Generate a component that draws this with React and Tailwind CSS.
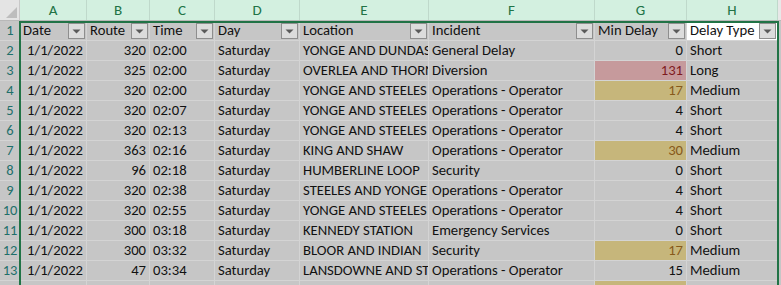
import React from "react";

const cols = [
  { l: "A", w: "w-[67px]" },
  { l: "B", w: "w-[63px]" },
  { l: "C", w: "w-[65px]" },
  { l: "D", w: "w-[85px]" },
  { l: "E", w: "w-[129px]" },
  { l: "F", w: "w-[166px]" },
  { l: "G", w: "w-[92px]" },
  { l: "H", w: "w-[91px]" },
];

const headers = ["Date", "Route", "Time", "Day", "Location", "Incident", "Min Delay", "Delay Type"];

const OPS = "Operations - Operator";
const rows = [
  ["320", "02:00", "YONGE AND DUNDAS", "General Delay", "0", "Short", ""],
  ["325", "02:00", "OVERLEA AND THORNCLIFFE", "Diversion", "131", "Long", "pink"],
  ["320", "02:00", "YONGE AND STEELES", OPS, "17", "Medium", "gold"],
  ["320", "02:07", "YONGE AND STEELES", OPS, "4", "Short", ""],
  ["320", "02:13", "YONGE AND STEELES", OPS, "4", "Short", ""],
  ["363", "02:16", "KING AND SHAW", OPS, "30", "Medium", "gold"],
  ["96", "02:18", "HUMBERLINE LOOP", "Security", "0", "Short", ""],
  ["320", "02:38", "STEELES AND YONGE", OPS, "4", "Short", ""],
  ["320", "02:55", "YONGE AND STEELES", OPS, "4", "Short", ""],
  ["300", "03:18", "KENNEDY STATION", "Emergency Services", "0", "Short", ""],
  ["300", "03:32", "BLOOR AND INDIAN", "Security", "17", "Medium", "gold"],
  ["47", "03:34", "LANSDOWNE AND ST. CLAIR", OPS, "15", "Medium", ""],
];

const cell = "h-[20px] border-r border-b border-[#d4d4d4] overflow-hidden whitespace-nowrap leading-[19px] text-[14.67px] text-[#111]";

function FilterBtn() {
  return (
    <div className="absolute right-[1px] top-[2px] w-[17px] h-[16px] border border-[#8e8e8e] bg-[#dcdcdc] flex items-center justify-center">
      <svg width="9" height="5" viewBox="0 0 9 5">
        <polygon points="0.5,0.5 8.5,0.5 4.5,4.5" fill="#5a5a5a" />
      </svg>
    </div>
  );
}

export default function App() {
  return (
    <div className="w-[781px] h-[285px] overflow-hidden bg-[#c6c6c6]" style={{ fontFamily: "Carlito, Calibri, Lato, sans-serif" }}>
      <div className="flex h-[21px] border-b border-[#b8b8b8] bg-[#d3f0e0]">
        <div className="w-[20px] h-full bg-[#e4e4e4] relative border-r border-[#c8c8c8]">
          <svg className="absolute right-[2px] bottom-[2px]" width="11" height="11" viewBox="0 0 11 11">
            <polygon points="11,0 11,11 0,11" fill="#bdbdbd" />
          </svg>
        </div>
        {cols.map((c) => (
          <div key={c.l} className={`${c.w} h-full border-r border-[#bfd9cb] flex items-center justify-center text-[15px] text-[#217346]`}>
            {c.l}
          </div>
        ))}
        <div className="flex-1 bg-[#e8e8e8]" />
      </div>

      <div className="relative flex">
        <div className="w-[20px] flex flex-col">
          {Array.from({ length: 14 }).map((_, i) => (
            <div key={i} className="h-[20px] border-b border-[#d4d4d4] flex items-center justify-center text-[14.5px] text-[#1e6f6a] leading-none">
              {i + 1}
            </div>
          ))}
        </div>

        <div className="flex flex-col">
          <div className="flex">
            {headers.map((h, i) => (
              <div key={h} className={`${cols[i].w} ${cell} relative pl-[3px] ${i === 7 ? "bg-white" : ""}`}>
                {h}
                <FilterBtn />
              </div>
            ))}
          </div>
          {rows.map((r, ri) => (
            <div key={ri} className="flex">
              <div className={`${cols[0].w} ${cell} text-right pr-[3px]`}>1/1/2022</div>
              <div className={`${cols[1].w} ${cell} text-right pr-[3px]`}>{r[0]}</div>
              <div className={`${cols[2].w} ${cell} pl-[3px]`}>{r[1]}</div>
              <div className={`${cols[3].w} ${cell} pl-[3px]`}>Saturday</div>
              <div className={`${cols[4].w} ${cell} pl-[3px]`}>{r[2]}</div>
              <div className={`${cols[5].w} ${cell} pl-[3px]`}>{r[3]}</div>
              <div
                className={`${cols[6].w} ${cell} text-right pr-[3px] ${
                  r[6] === "pink" ? "bg-[#c69a9c] !text-[#7e1a1e]" : r[6] === "gold" ? "bg-[#c6b67b] !text-[#87591a]" : ""
                }`}
              >
                {r[4]}
              </div>
              <div className={`${cols[7].w} ${cell} pl-[3px]`}>{r[5]}</div>
            </div>
          ))}
          <div className="flex">
            <div className={`${cols[0].w} ${cell}`} />
            <div className={`${cols[1].w} ${cell}`} />
            <div className={`${cols[2].w} ${cell}`} />
            <div className={`${cols[3].w} ${cell}`} />
            <div className={`${cols[4].w} ${cell}`} />
            <div className={`${cols[5].w} ${cell}`} />
            <div className={`${cols[6].w} ${cell} bg-[#c6b67b]`} />
            <div className={`${cols[7].w} ${cell}`} />
          </div>
        </div>

        <div className="absolute left-[19px] top-0 w-[760px] h-[300px] border-2 border-[#217346] pointer-events-none" />
      </div>
    </div>
  );
}
